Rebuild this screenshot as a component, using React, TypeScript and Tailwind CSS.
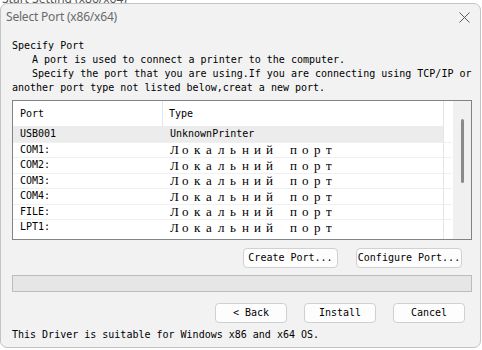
const mono = "font-['DejaVu_Sans_Mono','Liberation_Mono',monospace]";

const ports = ["COM1:", "COM2:", "COM3:", "COM4:", "FILE:", "LPT1:"];
const localPort = "Локальний порт".split("");

function WinButton({ label, w }: { label: string; w: string }) {
  return (
    <button
      className={`${w} h-[20px] rounded-[4px] border border-[#d0d0d0] bg-[#fdfdfd] text-[10px] leading-none text-black ${mono}`}
    >
      {label}
    </button>
  );
}

function CloseIcon() {
  return (
    <svg width="11" height="11" viewBox="0 0 11 11">
      <path d="M0.5 0.5 L10.5 10.5 M10.5 0.5 L0.5 10.5" stroke="#5a5a5a" strokeWidth="1" fill="none" />
    </svg>
  );
}

export default function App() {
  return (
    <div className="relative w-[482px] h-[350px] overflow-hidden bg-white pt-[3px]">
      {/* window behind, only its title peeks out */}
      <span className="absolute left-[2px] top-[-10px] text-[12px] text-[#555] font-['Noto_Sans',sans-serif]">
        Start Setting (x86/x64)
      </span>

      <div className="relative h-[345px] w-[481px] rounded-[7px] border border-[#c4c4c4] bg-[#f2f2f2] flex flex-col">
        {/* Title bar */}
        <div className="h-[26px] flex items-center justify-between pl-[5px] pr-[10px]">
          <span className="text-[12px] text-[#6a6a6a] font-['Noto_Sans',sans-serif] tracking-[-0.2px]">
            Select Port (x86/x64)
          </span>
          <CloseIcon />
        </div>

        <div className={`pt-[9px] pl-[11px] text-[10px] leading-[14px] text-black ${mono}`}>
          <div>Specify Port</div>
          <div className="pl-[20px]">A port is used to connect a printer to the computer.</div>
          <div className="pl-[20px] whitespace-nowrap">
            Specify the port that you are using.If you are connecting using TCP/IP or
          </div>
          <div>another port type not listed below,creat a new port.</div>

          {/* List box */}
          <div className="mt-[5px] w-[460px] h-[140px] border border-[#7f848b] bg-white flex">
            <div className="w-[439px] flex flex-col relative">
              <div className="absolute left-[430px] top-0 bottom-0 w-px bg-[#e5e5e5]" />
              <div className="h-[25px] flex items-center">
                <div className="w-[150px] h-full flex items-center pl-[7px] border-r border-[#e5e5e5]">Port</div>
                <div className="pl-[6px]">Type</div>
              </div>
              <div className="h-[15.5px] flex items-center">
                <div className="w-[430px] h-full flex items-center bg-[#ececec]">
                  <div className="w-[150px] pl-[7px]">USB001</div>
                  <div className="pl-[7px]">UnknownPrinter</div>
                </div>
              </div>
              {ports.map((p) => (
                <div key={p} className="h-[15.5px] flex items-center border-t border-[#f0f0f0]">
                  <div className="w-[150px] pl-[7px]">{p}</div>
                  <div className="pl-[7px] flex text-[13px] leading-none font-['Liberation_Serif',serif]">
                    {localPort.map((c, i) => (
                      <span key={i} className="w-[12px] inline-block">
                        {c === " " ? "\u00a0" : c}
                      </span>
                    ))}
                  </div>
                </div>
              ))}
            </div>
            <div className="flex-1" />
            <div className="w-[18px] bg-[#f0f0f0] pt-[18px] flex justify-center">
              <div className="w-[3px] h-[64px] rounded-full bg-[#8a8a8a]" />
            </div>
          </div>

          {/* Port buttons */}
          <div className="mt-[8px] w-[460px] flex justify-end gap-[18px] pr-[10px]">
            <WinButton label="Create Port..." w="w-[95px]" />
            <WinButton label="Configure Port..." w="w-[106px]" />
          </div>

          {/* Progress bar */}
          <div className="mt-[7px] w-[460px] h-[17px] border border-[#bcbcbc] bg-[#e6e6e6]" />

          {/* Wizard buttons */}
          <div className="mt-[11px] w-[460px] flex justify-end gap-[17px] pr-[7px]">
            <WinButton label="< Back" w="w-[72px]" />
            <WinButton label="Install" w="w-[72px]" />
            <WinButton label="Cancel" w="w-[72px]" />
          </div>

          <div className="mt-[5px]">This Driver is suitable for Windows x86 and x64 OS.</div>
        </div>
      </div>
    </div>
  );
}
